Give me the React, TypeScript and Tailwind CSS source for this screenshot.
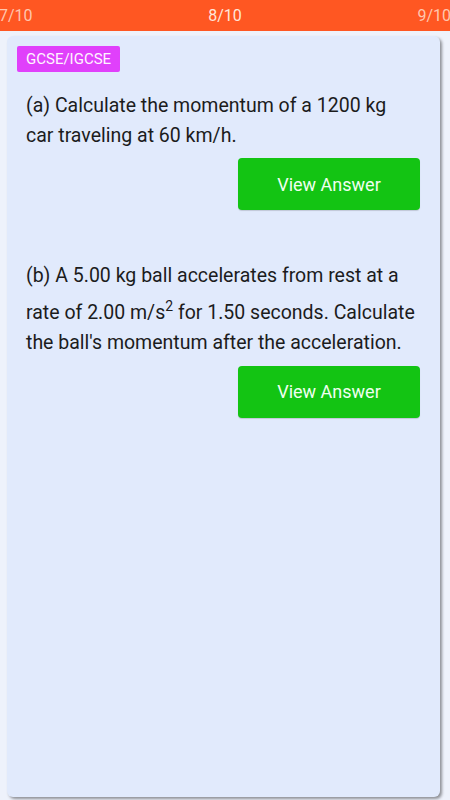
import React from 'react';

const font = { fontFamily: 'Roboto, "Noto Sans", sans-serif' };

function AnswerButton() {
  return (
    <div className="flex justify-end pr-[20px]">
      <button className="w-[182px] h-[52px] rounded-[4px] bg-[#13c413] text-[18px] text-[#effff0] shadow-[0_1px_1px_rgba(0,0,0,0.15)]">
        View Answer
      </button>
    </div>
  );
}

export default function App() {
  return (
    <div className="w-[450px] h-[800px] overflow-hidden bg-[#eef2fb] flex flex-col" style={font}>
      {/* pager strip */}
      <div className="h-[31px] bg-[#ff5722] flex items-center justify-between text-[16px] shrink-0">
        <span className="text-[#ffc6ae] -ml-[1px]">7/10</span>
        <span className="text-[#ffe6da]">8/10</span>
        <span className="text-[#ffc6ae] -mr-[1px]">9/10</span>
      </div>

      <div className="flex-1 pt-[5px] pl-[7px] pr-[10px] pb-[3px]">
        <div className="h-full rounded-[6px] bg-[#e1eafc] shadow-[2px_2px_3px_rgba(0,0,0,0.4)] pt-[10px]">
          <div className="pl-[10px]">
            <span className="inline-block h-[26px] px-[9px] leading-[26px] rounded-[2px] bg-[#e040fb] text-[#fff4ff] text-[15px]">
              GCSE/IGCSE
            </span>
          </div>

          <p className="mt-[19px] pl-[19px] pr-[24px] text-[19.5px] leading-[30px] text-[#1c1c1c]">
            (a) Calculate the momentum of a 1200 kg car traveling at 60 km/h.
          </p>
          <div className="mt-[7px]">
            <AnswerButton />
          </div>

          <p className="mt-[51px] pl-[19px] pr-[24px] text-[19.5px] leading-[30px] text-[#1c1c1c]">
            (b) A 5.00 kg ball accelerates from rest at a rate of 2.00 m/s
            <span className="align-super text-[14px] leading-[30px]">2</span> for 1.50 seconds. Calculate the
            ball's momentum after the acceleration.
          </p>
          <div className="mt-[8px]">
            <AnswerButton />
          </div>
        </div>
      </div>
    </div>
  );
}
